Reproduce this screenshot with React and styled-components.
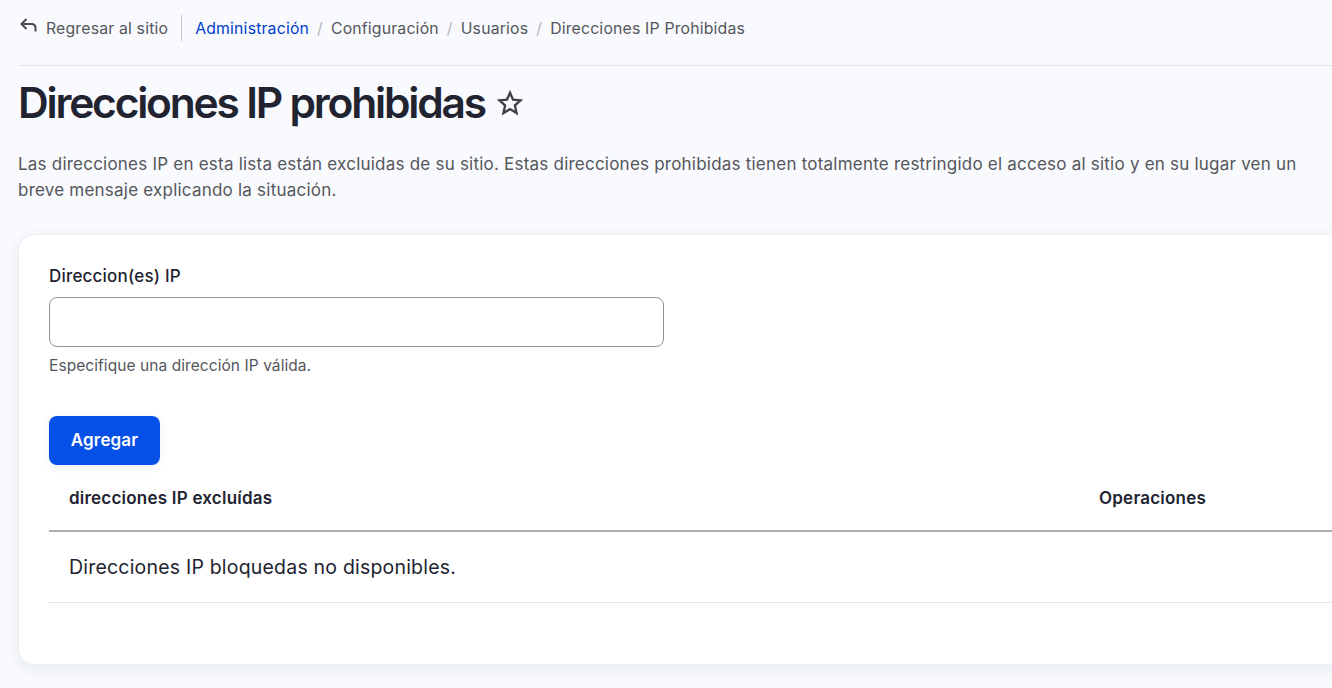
import React from "react";
import styled, { createGlobalStyle } from "styled-components";

const Global = createGlobalStyle`
  html, body { margin: 0; padding: 0; height: 688px; overflow: hidden; background: #f8fafe; }
  body { font-family: Inter, "Liberation Sans", sans-serif; color: #222330; }
`;
const Page = styled.div`
  display: flex;
  flex-direction: column;
  padding: 0 0 0 18px;
  width: 1314px;
`;
const Header = styled.div`
  display: flex;
  align-items: center;
  height: 56px;
  padding-bottom: 9px;
  border-bottom: 1px solid #e3e5ea;
  box-sizing: content-box;
  font-size: 15.8px;
  letter-spacing: 0.18px;
  color: #55565b;
`;
const BackLink = styled.a`
  display: flex;
  align-items: center;
  gap: 8px;
  height: 26px;
  padding-right: 13px;
  border-right: 1px solid #c4c5ca;
  margin-right: 13px;
  color: #55565b;
`;
const BackIcon = styled.svg`
  width: 19px;
  height: 19px;
  margin: -6px 0 0 1px;
`;
const Crumbs = styled.nav`
  display: flex;
  align-items: center;
`;
const Crumb = styled.a`
  color: ${(p) => (p.$active ? "#003ecc" : "#55565b")};
`;
const Sep = styled.span`
  color: #b5b6bb;
  margin: 0 8px;
`;
const TitleRow = styled.div`
  display: flex;
  align-items: center;
  gap: 11px;
  margin-top: 10px;
  height: 54px;
`;
const Title = styled.h1`
  margin: 0;
  font-size: 42.5px;
  font-weight: 600;
  letter-spacing: -2.2px;
  line-height: 54px;
  color: #222330;
`;
const Star = styled.svg`
  width: 28px;
  height: 28px;
`;
const Description = styled.p`
  margin: 21px 0 0;
  font-size: 17px;
  letter-spacing: 0.22px;
  line-height: 26px;
  color: #55565b;
  width: 1300px;
`;
const Card = styled.section`
  margin-top: 31px;
  width: 1361px;
  height: 431px;
  box-sizing: border-box;
  background: #fff;
  border: 1px solid #eef0f4;
  border-radius: 16px;
  box-shadow: 0 4px 14px rgba(30, 40, 70, 0.08);
  padding: 30px 30px 0;
`;
const Label = styled.label`
  display: block;
  font-size: 17px;
  letter-spacing: 0.2px;
  font-weight: 500;
  line-height: 22px;
  color: #222330;
`;
const Input = styled.input`
  display: block;
  box-sizing: border-box;
  width: 615px;
  height: 50px;
  margin-top: 10px;
  border: 1px solid #8e929c;
  border-radius: 8px;
  background: #fff;
  outline: none;
`;
const Help = styled.div`
  margin-top: 9px;
  font-size: 15.5px;
  letter-spacing: 0.07px;
  line-height: 20px;
  color: #55565b;
`;
const Button = styled.button`
  display: block;
  margin-top: 40px;
  width: 111px;
  height: 49px;
  padding: 0 0 2px;
  border: none;
  border-radius: 8px;
  background: #0550e6;
  color: #fff;
  font-family: inherit;
  font-size: 17px;
  letter-spacing: 0.15px;
  font-weight: 600;
  box-shadow: 0 2px 8px rgba(5, 80, 230, 0.08);
`;
const Table = styled.table`
  width: 1360px;
  border-collapse: collapse;
  table-layout: fixed;
`;
const Head = styled.th`
  height: 65px;
  padding: 0 20px;
  text-align: left;
  font-size: 17px;
  letter-spacing: 0.22px;
  font-weight: 600;
  color: #222330;
  border-bottom: 2px solid #adadb0;
  width: ${(p) => p.$width || "auto"};
`;
const Cell = styled.td`
  height: 70px;
  padding: 0 20px;
  font-size: 19.5px;
  letter-spacing: 0.2px;
  color: #222330;
  border-bottom: 1px solid #e3e5ea;
`;

export default function App() {
  return (
    <Page>
      <Global />
      <Header>
        <BackLink>
          <BackIcon viewBox="0 0 19 19" fill="none" stroke="#4a4b52" strokeWidth="2">
            <path d="M7.5 3 L2.5 8 L7.5 13" />
            <path d="M2.5 8 H12.5 Q16.5 8 16.5 12 V15.5" />
          </BackIcon>
          Regresar al sitio
        </BackLink>
        <Crumbs>
          <Crumb $active>Administración</Crumb>
          <Sep>/</Sep>
          <Crumb>Configuración</Crumb>
          <Sep>/</Sep>
          <Crumb>Usuarios</Crumb>
          <Sep>/</Sep>
          <Crumb>Direcciones IP Prohibidas</Crumb>
        </Crumbs>
      </Header>
      <TitleRow>
        <Title>Direcciones IP prohibidas</Title>
        <Star viewBox="0 0 24 24" fill="none" stroke="#3f4047" strokeWidth="2" strokeLinejoin="miter">
          <path d="M12 3.2 L14.6 9.2 L21 9.8 L16.2 14.1 L17.6 20.6 L12 17.2 L6.4 20.6 L7.8 14.1 L3 9.8 L9.4 9.2 Z" />
        </Star>
      </TitleRow>
      <Description>
        Las direcciones IP en esta lista están excluidas de su sitio. Estas direcciones prohibidas tienen totalmente restringido el acceso al sitio y en su lugar ven un breve mensaje explicando la situación.
      </Description>
      <Card>
        <Label>Direccion(es) IP</Label>
        <Input type="text" />
        <Help>Especifique una dirección IP válida.</Help>
        <Button>Agregar</Button>
        <Table>
          <thead>
            <tr>
              <Head $width="990px">direcciones IP excluídas</Head>
              <Head>Operaciones</Head>
            </tr>
          </thead>
          <tbody>
            <tr>
              <Cell colSpan={2}>Direcciones IP bloquedas no disponibles.</Cell>
            </tr>
          </tbody>
        </Table>
      </Card>
    </Page>
  );
}
